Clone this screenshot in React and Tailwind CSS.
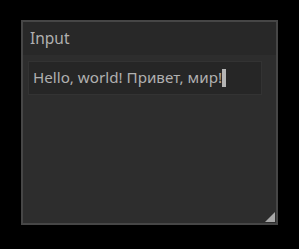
export default function App() {
  return (
    <div className="w-[299px] h-[249px] bg-black pt-[20px] pl-[21px]" style={{ fontFamily: '"Noto Sans", sans-serif' }}>
      <div className="relative w-[257px] h-[205px] border-2 border-[#464646] bg-[#2d2d2d] flex flex-col">
        <div className="h-[33px] bg-[#282828] flex items-center pl-[7px] text-[15.5px] text-[#b0b0b0] leading-none">
          Input
        </div>
        <div className="pl-[5px] pt-[6px]">
          <div className="w-[234px] h-[34px] border border-[#333333] bg-[#262626] flex items-center pl-[4px] text-[15.2px] text-[#b0b0b0] leading-none whitespace-nowrap">
            <span>Hello, world! Привет, мир!</span>
            <span className="inline-block w-[4px] h-[18px] bg-[#b4b4b4]" />
          </div>
        </div>
        <svg className="absolute right-[1px] bottom-[1px]" width="10" height="10" viewBox="0 0 10 10">
          <polygon points="10,0 10,10 0,10" fill="#a8a8a8" />
        </svg>
      </div>
    </div>
  );
}
